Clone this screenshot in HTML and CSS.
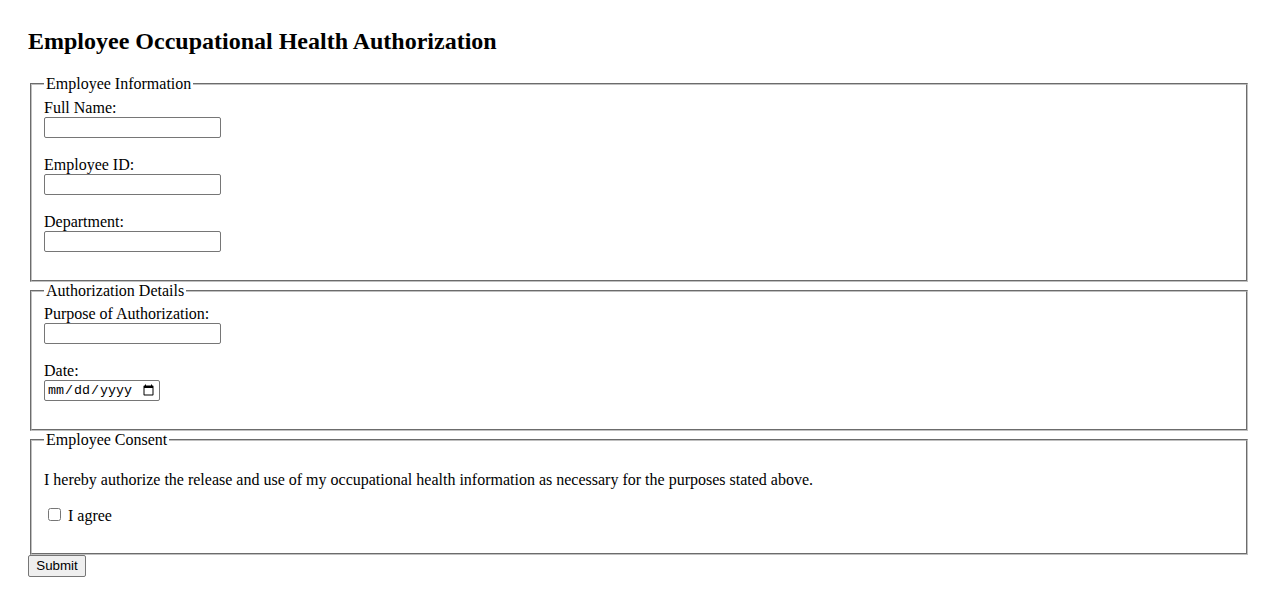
FILE: index.html
```html
<!DOCTYPE html>
<html lang="en">
<head>
<meta charset="utf-8">
<title>Employee Occupational Health Authorization</title>
<link rel="stylesheet" href="styles.css">
</head>
<body class="page">
<h2 class="title">Employee Occupational Health Authorization</h2>
<form class="form">
  <fieldset class="group">
    <legend class="group-legend">Employee Information</legend>
    <label class="field-label" for="fullName">Full Name:</label><br>
    <input class="text-input" type="text" id="fullName"><br><br>
    <label class="field-label" for="empId">Employee ID:</label><br>
    <input class="text-input" type="text" id="empId"><br><br>
    <label class="field-label" for="dept">Department:</label><br>
    <input class="text-input" type="text" id="dept"><br><br>
  </fieldset>
  <fieldset class="group">
    <legend class="group-legend">Authorization Details</legend>
    <label class="field-label" for="purpose">Purpose of Authorization:</label><br>
    <input class="text-input" type="text" id="purpose"><br><br>
    <label class="field-label" for="date">Date:</label><br>
    <input class="date-input" type="date" id="date"><br><br>
  </fieldset>
  <fieldset class="group group-last">
    <legend class="group-legend">Employee Consent</legend>
    <p class="consent-text">I hereby authorize the release and use of my occupational health information as necessary for the purposes stated above.</p>
    <p class="consent-check"><input class="checkbox" type="checkbox" id="agree"> <label class="field-label" for="agree">I agree</label></p>
  </fieldset>
  <button class="submit" type="submit">Submit</button>
</form>
</body>
</html>
```

FILE: styles.css
```css
.page {
  margin: 0;
  padding: 28px;
  font-family: "Liberation Serif", "Times New Roman", serif;
  font-size: 16px;
  color: #000;
  background: #fff;
}

.title {
  font-size: 24px;
  font-weight: bold;
  margin: 0 0 20px 0;
}

.form {
  margin: 0;
}

.group {
  margin: 0 2px;
  padding: 5.6px 12px 10px;
  border: 2px groove rgb(192, 192, 192);
  min-width: min-content;
}

.group-last {
  padding-bottom: 12px;
}

.group-legend {
  padding: 0 2px;
}

.text-input {
  box-sizing: border-box;
  width: 177px;
  height: 21px;
  margin: 0;
  padding: 1px 2px;
  border: 1px solid #767676;
  border-radius: 2px;
  font-family: "Liberation Sans", Arial, sans-serif;
  font-size: 13.333px;
  vertical-align: baseline;
}

.date-input {
  box-sizing: border-box;
  width: 116px;
  height: 21px;
  margin: 0;
  padding: 1px 2px;
  border: 1px solid #767676;
  border-radius: 2px;
  font-family: "Liberation Mono", "DejaVu Sans Mono", monospace;
  font-size: 13.333px;
}

.consent-text {
  margin: 16px 0;
}

.consent-check {
  margin: 16px 0;
}

.checkbox {
  margin: 3px 3px 3px 4px;
}

.submit {
  box-sizing: border-box;
  height: 22px;
  min-width: 58px;
  font-family: "Liberation Sans", Arial, sans-serif;
  font-size: 13.333px;
  padding: 1px 6px;
  margin: 0;
  border: 1px solid #767676;
  border-radius: 2px;
  background: #efefef;
  color: #000;
}
```
